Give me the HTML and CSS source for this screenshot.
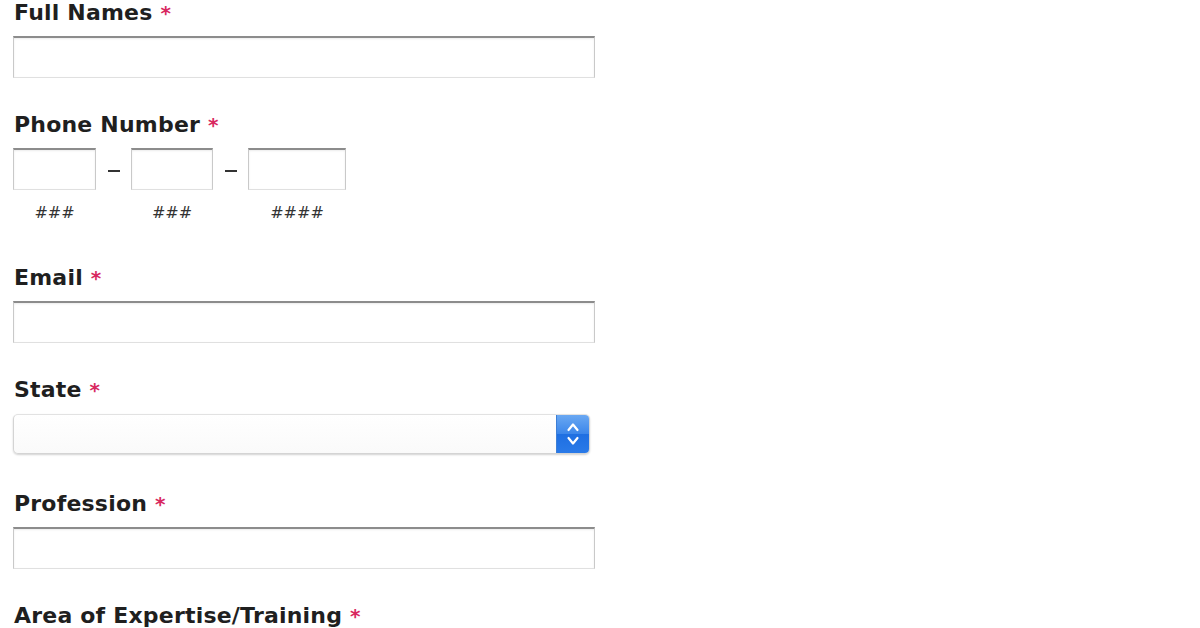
FILE: index.html
```html
<!DOCTYPE html>
<html>
<head>
<meta charset="utf-8">
<link rel="stylesheet" href="styles.css">
</head>
<body>
<form class="form">
  <div class="field">
    <label class="label">Full Names <span class="req">*</span></label>
    <div class="textbox"></div>
  </div>
  <div class="field field-phone">
    <label class="label">Phone Number <span class="req">*</span></label>
    <div class="phone">
      <div class="phone-part">
        <div class="textbox pbox w1"></div>
        <div class="hint">###</div>
      </div>
      <div class="dash"><span class="dash-bar"></span></div>
      <div class="phone-part">
        <div class="textbox pbox w2"></div>
        <div class="hint">###</div>
      </div>
      <div class="dash"><span class="dash-bar"></span></div>
      <div class="phone-part">
        <div class="textbox pbox w3"></div>
        <div class="hint">####</div>
      </div>
    </div>
  </div>
  <div class="field">
    <label class="label">Email <span class="req">*</span></label>
    <div class="textbox"></div>
  </div>
  <div class="field">
    <label class="label">State <span class="req">*</span></label>
    <div class="select">
      <div class="select-btn">
        <svg width="16" height="32" viewBox="0 0 16 32">
          <path d="M3.5 12 L8 6.5 L12.5 12" fill="none" stroke="#fff" stroke-width="2.2" stroke-linecap="round" stroke-linejoin="round"/>
          <path d="M3.5 20 L8 25.5 L12.5 20" fill="none" stroke="#fff" stroke-width="2.2" stroke-linecap="round" stroke-linejoin="round"/>
        </svg>
      </div>
    </div>
  </div>
  <div class="field">
    <label class="label">Profession <span class="req">*</span></label>
    <div class="textbox"></div>
  </div>
  <div class="field">
    <label class="label">Area of Expertise/Training <span class="req">*</span></label>
  </div>
</form>
</body>
</html>
```
FILE: styles.css
```css
html, body {
  margin: 0;
  padding: 0;
  background: #fff;
}
body {
  width: 1200px;
  height: 628px;
  overflow: hidden;
  font-family: "DejaVu Sans", Verdana, sans-serif;
}
.form {
  padding-left: 13px;
}
.field {
  display: flex;
  flex-direction: column;
  align-items: flex-start;
  margin-bottom: 34px;
}
.label {
  display: block;
  height: 26px;
  font-size: 22px;
  line-height: 26px;
  font-weight: bold;
  color: #1f1f1f;
  letter-spacing: 0.2px;
  padding-left: 1px;
  margin-bottom: 10px;
  white-space: nowrap;
}
.req {
  color: #d8285f;
  font-size: 20px;
  line-height: 1;
}
.textbox {
  box-sizing: border-box;
  width: 582px;
  height: 42px;
  background: #fff;
  border-top: 2px solid #8c8c8c;
  border-left: 1px solid #c9c9c9;
  border-right: 1px solid #c9c9c9;
  border-bottom: 1px solid #e0e0e0;
  box-shadow: inset 0 1px 2px rgba(0,0,0,0.08);
}
.phone {
  display: flex;
  align-items: flex-start;
}
.phone-part {
  display: flex;
  flex-direction: column;
  align-items: center;
}
.pbox.w1 { width: 83px; }
.pbox.w2 { width: 82px; }
.pbox.w3 { width: 98px; }
.dash {
  width: 35px;
  height: 42px;
  display: flex;
  align-items: center;
  justify-content: center;
}
.dash-bar {
  display: block;
  width: 12px;
  height: 2px;
  background: #333;
  margin-top: 4px;
}
.hint {
  height: 32px;
  font-size: 16px;
  line-height: 28px;
  margin-top: 9px;
  color: #333;
}
.select {
  box-sizing: border-box;
  width: 577px;
  height: 40px;
  border: 1px solid #d4d4d4;
  border-top-color: #e2e2e2;
  border-radius: 5px;
  background: linear-gradient(#ffffff, #fafafa);
  box-shadow: 0 1px 2px rgba(0,0,0,0.18);
  display: flex;
  justify-content: flex-end;
  overflow: hidden;
  margin-top: 1px;
  margin-bottom: 3px;
}
.select-btn {
  width: 32px;
  height: 100%;
  background: linear-gradient(#6aa8f2, #3b86ea 50%, #1e6fe2 51%, #2a7ae8);
  border-left: 1px solid #3d7fd6;
  display: flex;
  align-items: center;
  justify-content: center;
}
```
